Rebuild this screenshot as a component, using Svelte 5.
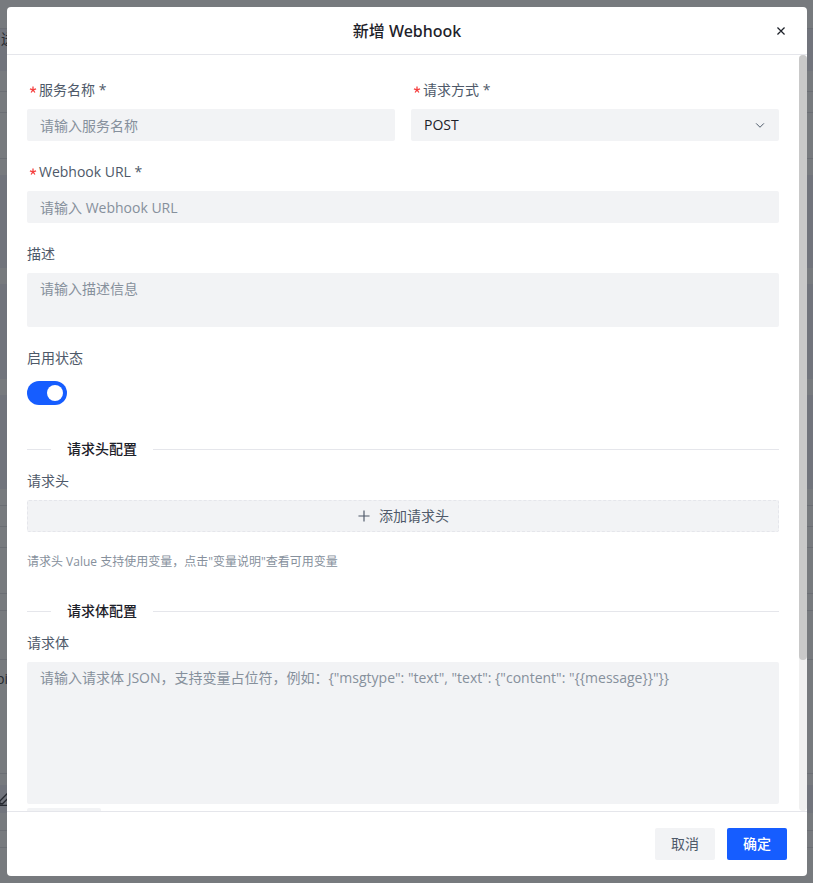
<script>
  let name = $state("");
  let method = $state("POST");
  let url = $state("");
  let description = $state("");
  let enabled = $state(true);
  let body = $state("");

  // share of the content that is scrolled past, for the custom scrollbar
  let scrolled = $state(0);

  const methods = ["POST", "GET", "PUT", "PATCH"];
  const bodyPlaceholder =
    '请输入请求体 JSON，支持变量占位符，例如：{"msgtype": "text", "text": {"content": "{{message}}"}}';

  // dimmed rows of the page under the mask
  const lines = [28, 91, 112, 158, 505, 526, 547, 593, 610, 659, 773, 830, 847];
  const bands = [
    { top: 28, height: 43 },
    { top: 175, height: 93 },
    { top: 284, height: 95 },
    { top: 395, height: 94 },
    { top: 785, height: 28 },
  ];

  const onScroll = ({ currentTarget: el }) => {
    scrolled = (el.scrollTop / el.scrollHeight) * 100;
  };
</script>

{#snippet star()}
  <svg class="star" width="8" height="8" viewBox="0 0 8 8" fill="none" stroke="currentColor" stroke-width="1.3" aria-hidden="true">
    <path d="M4 .5v3.3M4 3.8.9 2.8M4 3.8l3.1-1M4 3.8 2.1 6.5M4 3.8l1.9 2.7" />
  </svg>
{/snippet}

<div class="mask">
  <div class="page" aria-hidden="true">
    {#each bands as band}
      <div class="band" style={`top: ${band.top}px; height: ${band.height}px`}></div>
    {/each}
    {#each lines as top}
      <div class="line" style={`top: ${top}px`}></div>
    {/each}
    <span class="peek peek-nav">送</span>
    <span class="peek peek-api">pi</span>
    <svg class="peek peek-edit" width="16" height="16" viewBox="0 0 48 48" fill="none" stroke="currentColor" stroke-width="4">
      <path d="m30.5 19.3 5.6 5.6M8.6 41.2h8l24-24-8-8-24 24v8ZM6 46h36" />
    </svg>
  </div>

  <div class="modal" role="dialog" aria-modal="true" aria-labelledby="modal-title">
    <header>
      <h1 id="modal-title">新增 Webhook</h1>
      <button class="close" type="button" aria-label="关闭">
        <svg width="12" height="12" viewBox="0 0 48 48" fill="none" stroke="currentColor" stroke-width="5">
          <path d="M9.857 9.858 24 24m0 0 14.142 14.142M24 24 38.142 9.858M24 24 9.857 38.142" />
        </svg>
      </button>
    </header>

    <div class="main">
      <form id="webhook-form" class="content" onscroll={onScroll}>
        <div class="row">
          <div class="item">
            <label for="name">{@render star()}服务名称 *</label>
            <input id="name" type="text" placeholder="请输入服务名称" bind:value={name} />
          </div>
          <div class="item">
            <label for="method">{@render star()}请求方式 *</label>
            <div class="select">
              <select id="method" bind:value={method}>
                {#each methods as option (option)}
                  <option value={option}>{option}</option>
                {/each}
              </select>
              <svg width="12" height="12" viewBox="0 0 48 48" fill="none" stroke="currentColor" stroke-width="4">
                <path d="M39.6 17.443 24.043 33 8.487 17.443" />
              </svg>
            </div>
          </div>
        </div>

        <div class="item">
          <label for="url">{@render star()}Webhook URL *</label>
          <input id="url" type="text" placeholder="请输入 Webhook URL" bind:value={url} />
        </div>

        <div class="item">
          <label for="description">描述</label>
          <textarea id="description" class="short" placeholder="请输入描述信息" bind:value={description}></textarea>
        </div>

        <div class="item">
          <label for="enabled">启用状态</label>
          <div class="switch-wrap">
            <input id="enabled" class="switch" type="checkbox" role="switch" bind:checked={enabled} />
          </div>
        </div>

        <h2>请求头配置</h2>
        <div class="item">
          <div class="label" id="headers-label">请求头</div>
          <button class="add" type="button" aria-describedby="headers-label">
            <svg width="14" height="14" viewBox="0 0 48 48" fill="none" stroke="currentColor" stroke-width="4">
              <path d="M5 24h38M24 5v38" />
            </svg>
            添加请求头
          </button>
        </div>
        <p class="hint">请求头 Value 支持使用变量，点击"变量说明"查看可用变量</p>

        <h2>请求体配置</h2>
        <div class="item">
          <label for="body">请求体</label>
          <textarea id="body" class="tall" placeholder={bodyPlaceholder} bind:value={body}></textarea>
          <button class="small" type="button">变量说明</button>
        </div>
      </form>
      <div class="scrollbar">
        <div class="thumb" style={`top: ${scrolled}%`}></div>
      </div>
    </div>

    <footer>
      <button class="btn" type="button">取消</button>
      <button class="btn primary" type="submit" form="webhook-form">确定</button>
    </footer>
  </div>
</div>

<style>
  :global(body) {
    margin: 0;
  }

  .mask {
    --blue: #165dff;
    --fill: #f2f3f5;
    --border: #e5e6eb;
    --text: #1d2129;
    --text-2: #4e5969;
    --text-3: #86909c;
    position: relative;
    display: flex;
    height: 100vh;
    box-sizing: border-box;
    padding: 7px 6px 7px 7px;
    background: #777a7e;
    color: var(--text);
    font-family: "Open Sans", "Noto Sans CJK SC", sans-serif;
    font-size: 14px;
    line-height: 22px;
  }

  .page {
    position: absolute;
    inset: 0;
    overflow: hidden;
  }

  .band,
  .line {
    position: absolute;
    left: 0;
    right: 0;
  }

  .band {
    background: #71747c;
  }

  .line {
    height: 1px;
    background: #6b6e74;
  }

  .peek {
    position: absolute;
    color: #262930;
  }

  .peek-nav {
    top: 28px;
    left: 1px;
  }

  .peek-api {
    top: 668px;
    left: -4px;
  }

  .peek-edit {
    top: 790px;
    left: -3px;
  }

  .modal {
    position: relative;
    display: flex;
    flex: 1;
    flex-direction: column;
    min-width: 0;
    overflow: hidden;
    border-radius: 4px;
    background: #fff;
  }

  header {
    position: relative;
    display: flex;
    flex: none;
    align-items: center;
    justify-content: center;
    height: 47px;
    border-bottom: 1px solid var(--border);
  }

  h1,
  h2 {
    margin: 0;
    font-family: "Noto Sans", "Noto Sans CJK SC", sans-serif;
    font-weight: 500;
  }

  h1 {
    font-size: 16px;
    line-height: 24px;
  }

  button,
  input,
  select,
  textarea {
    box-sizing: border-box;
    margin: 0;
    border: 0;
    border-radius: 2px;
    outline: none;
    font: inherit;
    color: inherit;
  }

  button {
    cursor: pointer;
  }

  .close {
    position: absolute;
    right: 20px;
    display: flex;
    padding: 0;
    background: none;
  }

  .main {
    display: flex;
    flex: 1;
    min-height: 0;
  }

  .content {
    flex: 1;
    min-width: 0;
    box-sizing: border-box;
    padding: 24px 20px 145px;
    overflow-y: scroll;
    scrollbar-width: none;
  }

  .scrollbar {
    position: relative;
    flex: none;
    width: 8px;
    border-radius: 4px;
    background: #f0f0f0;
  }

  .thumb {
    position: absolute;
    width: 100%;
    height: 80%;
    border-radius: 4px;
    background: #c9c9c9;
  }

  .row {
    display: grid;
    grid-template-columns: 1fr 1fr;
    gap: 16px;
  }

  .item {
    margin-bottom: 20px;
  }

  label,
  .label {
    display: flex;
    align-items: center;
    margin-bottom: 8px;
    color: var(--text-2);
  }

  .star {
    margin: 0 2px;
    color: #f53f3f;
  }

  input[type="text"],
  select,
  textarea {
    display: block;
    width: 100%;
    padding: 4px 13px;
    background: var(--fill);
  }

  input[type="text"],
  select {
    height: 32px;
  }

  textarea {
    padding-top: 5px;
    resize: none;
  }

  .short {
    height: 54px;
  }

  .tall {
    height: 142px;
  }

  ::placeholder {
    color: var(--text-3);
    opacity: 1;
  }

  input:focus,
  textarea:focus {
    box-shadow: 0 0 0 1px var(--blue);
  }

  .select {
    position: relative;
  }

  .select select {
    appearance: none;
  }

  .select svg {
    position: absolute;
    top: 10px;
    right: 13px;
    color: var(--text-2);
    pointer-events: none;
  }

  .switch-wrap {
    display: flex;
    align-items: center;
    height: 32px;
  }

  .switch {
    display: flex;
    width: 40px;
    height: 24px;
    padding: 4px;
    border-radius: 12px;
    background: #c9cdd4;
    appearance: none;
    cursor: pointer;
  }

  .switch::before {
    content: "";
    width: 16px;
    height: 16px;
    border-radius: 50%;
    background: #fff;
  }

  .switch:checked {
    justify-content: flex-end;
    background: var(--blue);
  }

  h2 {
    display: flex;
    align-items: center;
    gap: 16px;
    height: 40px;
    padding-bottom: 1px;
    font-size: 14px;
  }

  h2::before,
  h2::after {
    content: "";
    height: 1px;
    background: var(--border);
  }

  h2::before {
    width: 24px;
  }

  h2::after {
    flex: 1;
  }

  .add {
    display: flex;
    align-items: center;
    justify-content: center;
    gap: 8px;
    width: 100%;
    height: 32px;
    border: 1px dashed var(--border);
    background: var(--fill);
    color: var(--text-2);
  }

  .hint {
    margin: 0 0 20px;
    color: var(--text-3);
    font-size: 12px;
    line-height: 19px;
  }

  .small {
    display: block;
    height: 28px;
    margin-top: 4px;
    padding: 0 13px;
    background: var(--fill);
    color: var(--text-2);
    font-size: 12px;
  }

  footer {
    display: flex;
    flex: none;
    justify-content: flex-end;
    gap: 12px;
    padding: 16px 20px;
    border-top: 1px solid var(--border);
  }

  .btn {
    height: 32px;
    padding: 0 16px;
    background: var(--fill);
    color: var(--text-2);
  }

  .primary {
    background: var(--blue);
    color: #fff;
    font-weight: 500;
  }
</style>
